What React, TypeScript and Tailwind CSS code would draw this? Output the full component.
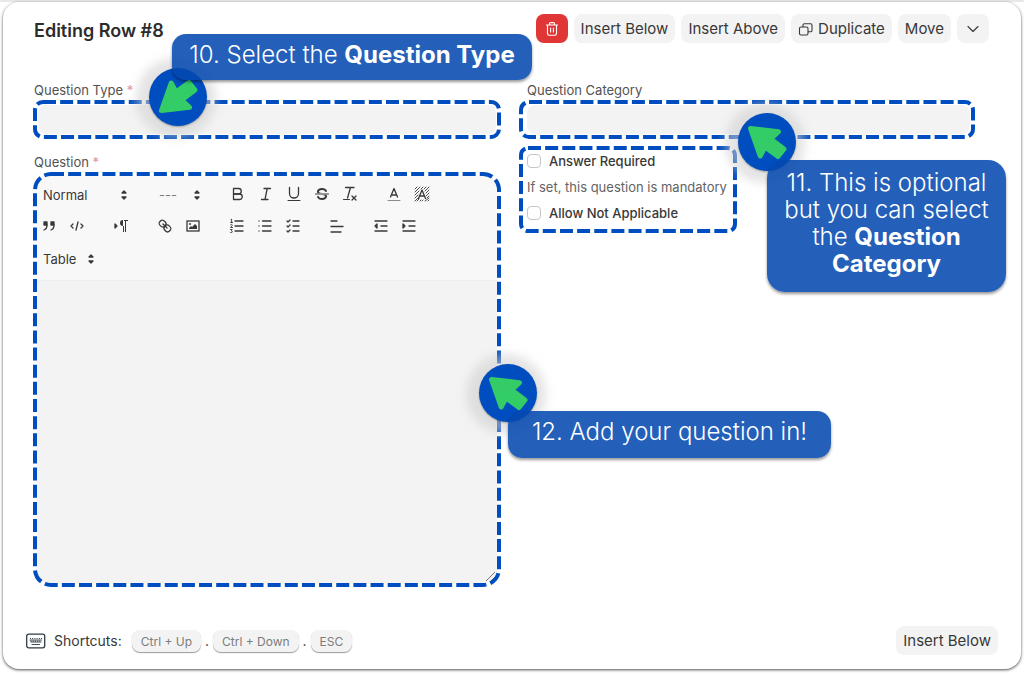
import React from "react";

const thin = { strokeWidth: 1 };

function Icon({ children, className = "" }: { children: React.ReactNode; className?: string }) {
  return (
    <svg
      viewBox="0 0 18 18"
      width="18"
      height="18"
      fill="none"
      stroke="#383838"
      strokeWidth="1.3"
      strokeLinecap="round"
      strokeLinejoin="round"
      aria-hidden="true"
      className={className}
    >
      {children}
    </svg>
  );
}

function Tool({ label, children }: { label: string; children: React.ReactNode }) {
  return (
    <button type="button" aria-label={label} className="flex h-6 w-7 items-center justify-center">
      <Icon>{children}</Icon>
    </button>
  );
}

function Picker({ label, value, width, tone }: { label: string; value: string; width: string; tone: string }) {
  return (
    <div className={`relative h-6 ${width}`}>
      <select
        aria-label={label}
        className={`h-6 w-full appearance-none bg-transparent pl-2 text-[13px] leading-6 outline-none ${tone}`}
      >
        <option>{value}</option>
      </select>
      <Icon className="pointer-events-none absolute top-1 right-0.5">
        <polygon points="7 11 9 13 11 11" fill="#383838" />
        <polygon points="7 7 9 5 11 7" fill="#383838" />
      </Icon>
    </div>
  );
}

function DashedFrame({ radius }: { radius: number }) {
  return (
    <svg className="pointer-events-none absolute inset-0 h-full w-full" aria-hidden="true">
      <rect
        x="2"
        y="2"
        rx={radius}
        className="h-[calc(100%-4px)] w-[calc(100%-4px)]"
        fill="none"
        stroke="#004dbf"
        strokeWidth="4"
        strokeDasharray="13 4.15"
      />
    </svg>
  );
}

function Pointer({ place, flip = "" }: { place: string; flip?: string }) {
  return (
    <div
      className={`pointer-events-none absolute size-[58px] rounded-full bg-[#004dbf] shadow-[0_1px_2px_rgba(0,0,0,0.3),-2px_1px_10px_11px_rgba(205,205,205,0.55)] ${place}`}
    >
      <svg viewBox="0 0 58 58" className={`size-[58px] ${flip}`} aria-hidden="true">
        <path
          d="M12.5 15.5 L40.5 18.7 L32.7 26 L46 36 L40 43.5 L27 34 L22.2 43 Z"
          fill="#33cc66"
          stroke="#33cc66"
          strokeWidth="5"
          strokeLinejoin="round"
        />
      </svg>
    </div>
  );
}

function Callout({ place, children }: { place: string; children: React.ReactNode }) {
  return (
    <div
      className={`pointer-events-none absolute flex items-center justify-center bg-[#0348af]/87 text-center font-light text-white shadow-[0_2px_3px_rgba(0,0,0,0.4)] ${place}`}
    >
      <p>{children}</p>
    </div>
  );
}

const action =
  "flex h-[29px] items-center justify-center gap-1 rounded-lg bg-[#f3f3f3] text-[15px] leading-5 text-[#383838]";
const label = "block h-[21px] pt-px text-[13px] leading-5 text-[#525252]";
const key =
  "flex h-[22px] items-center rounded-lg bg-[#f3f3f3] px-[9px] pt-px text-[12px] text-[#7c7c7c] shadow-[0_1px_1px_rgba(0,0,0,0.4)]";

function Check({ id, text }: { id: string; text: string }) {
  return (
    <div className="flex h-5 items-center gap-2">
      <input
        id={id}
        type="checkbox"
        className="size-3.5 shrink-0 appearance-none rounded-sm border border-[#c7c7c7] bg-white"
      />
      <label htmlFor={id} className="text-[13px] leading-5 font-medium whitespace-nowrap text-[#383838]">
        {text}
      </label>
    </div>
  );
}

export default function App() {
  return (
    <div className="bg-[linear-gradient(#e8e8e8_2px,#ffffff_2px)] px-[3px] pt-0.5 pb-1.5 font-['Inter',sans-serif]">
      <main className="rounded-2xl bg-white shadow-[0_1px_3px_rgba(0,0,0,0.7)]">
        <header className="flex items-center justify-between pt-3 pr-8 pl-[31px]">
          <h1 className="pt-1 text-[18px] leading-6 font-semibold text-[#2c2c2c]">Editing Row #8</h1>
          <div className="flex gap-1.5">
            <button type="button" aria-label="Delete row" className={`${action} w-8 bg-[#e03636]!`}>
              <svg width="14" height="16" viewBox="0 0 14 16" fill="none" stroke="#fff" strokeWidth="1.1" strokeLinecap="round" strokeLinejoin="round" aria-hidden="true">
                <path d="M1.5 4h11M4.5 4V2.6c0-.6.4-1 1-1h3c.6 0 1 .4 1 1V4M2.5 4v8.5c0 1 .7 1.7 1.7 1.7h5.6c1 0 1.700-.7 1.700-1.700V4M5.600 7v4M8.400 7v4" />
              </svg>
            </button>
            <button type="button" className={`${action} px-[7px]`}>Insert Below</button>
            <button type="button" className={`${action} px-[7px]`}>Insert Above</button>
            <button type="button" className={`${action} px-[7px]`}>
              <svg width="16" height="16" viewBox="0 0 16 16" fill="none" stroke="#383838" strokeWidth="1.1" strokeLinejoin="round" aria-hidden="true">
                <rect x="1.500" y="6" width="8.500" height="8" rx="1.500" />
                <path d="M5 6V4.200c0-.8.6-1.400 1.400-1.400h6.200c.8 0 1.400.6 1.400 1.400v5.200c0 .8-.6 1.400-1.400 1.400H10" />
              </svg>
              Duplicate
            </button>
            <button type="button" className={`${action} px-[7px]`}>Move</button>
            <button type="button" aria-label="Collapse" className={`${action} w-8`}>
              <svg width="12" height="8" viewBox="0 0 12 8" fill="none" stroke="#383838" strokeWidth="1.100" strokeLinecap="round" strokeLinejoin="round" aria-hidden="true">
                <path d="M1 1.500l5 5 5-5" />
              </svg>
            </button>
          </div>
        </header>

        <div className="grid grid-cols-[468fr_456fr] gap-[18px] pt-9 pr-[46px] pl-[30px]">
          <section>
            <div className="relative">
              <label htmlFor="question-type" className={`${label} pl-px`}>
                Question Type <span className="text-[#eb9091]">*</span>
              </label>
              <div className="relative h-[39px] p-[5px]">
                <input id="question-type" className="h-full w-full rounded-lg bg-[#f3f3f3] px-2 text-sm outline-none" />
                <DashedFrame radius={8} />
              </div>
              <Pointer place="top-[-11px] left-[116px] z-10" flip="-scale-y-100" />
              <Callout place="top-[-45px] left-[139px] z-10 h-[46px] w-[360px] rounded-[14px] pb-1.5 text-[24px] leading-[27px] whitespace-nowrap">
                10. Select the <b className="font-bold">Question Type</b>
              </Callout>
            </div>

            <div className="relative mt-3">
              <span id="question-label" className={`${label} pl-px`}>
                Question <span className="text-[#eb9091]">*</span>
              </span>
              <div className="relative p-1">
                <div className="rounded-xl bg-[#f3f3f3]">
                  <div role="toolbar" aria-label="Formatting" className="flex h-[105px] flex-col gap-2 rounded-t-xl border-b border-[#ededed] bg-[#f8f8f8] pt-1.5">
                    <div className="-ml-0.5 flex gap-4">
                      <Picker label="Heading" value="Normal" width="w-[100px]" tone="text-[#383838]" />
                      <Picker label="Size" value="---" width="w-[57px]" tone="text-[#7c7c7c]" />
                      <div className="flex">
                        <Tool label="Bold">
                          <path d="M4.500,3.500H9.500A2.700,2.700,0,0,1,9.500,9H4.500Z" />
                          <path d="M4.500,9h6A2.700,2.700,0,0,1,10.500,14.500H4.500Z" />
                        </Tool>
                        <Tool label="Italic">
                          <path d="M7 3.500H13.500M4.500 14.500H11M8 14.500L10.200 3.500" />
                        </Tool>
                        <Tool label="Underline">
                          <path d="M4.500,2.500V8.500a4.500,4.500,0,0,0,9,0V2.500" />
                          <path d="M3 15.500H15" {...thin} />
                        </Tool>
                        <Tool label="Strike">
                          <path d="M15.500 9H2.500" {...thin} />
                          <path stroke="none" fill="#383838" d="M9.007,8C6.542,7.791,6,7.519,6,6.500,6,5.792,7.283,5,9,5c1.571,0,2.765.679,2.969,1.309a1,1,0,0,0,1.900-.617C13.356,4.106,11.354,3,9,3,6.200,3,4,4.538,4,6.500a3.200,3.200,0,0,0,.5,1.843Z" />
                          <path stroke="none" fill="#383838" d="M8.984,10C11.457,10.208,12,10.479,12,11.500c0,0.708-1.283,1.500-3,1.500-1.571,0-2.765-.679-2.969-1.309a1,1,0,1,0-1.900.617C4.644,13.894,6.646,15,9,15c2.800,0,5-1.538,5-3.500a3.200,3.200,0,0,0-.5-1.843Z" />
                        </Tool>
                        <Tool label="Clear formatting">
                          <path d="M4.500 2.500H13M6.500 13L9.500 2.500M11 11L15 15M15 11L11 15" />
                          <path d="M2.500 14.500H8.500" {...thin} />
                        </Tool>
                      </div>
                      <div className="flex">
                        <Tool label="Text colour">
                          <path d="M5.500 12L9 3.500L12.500 12M11.600 10H6.400" />
                          <path d="M3 15.500H15" stroke="#8a8a8a" {...thin} />
                        </Tool>
                        <Tool label="Background colour">
                          <path
                            d="M2 4L4 2M2 7L7 2M2 10L6 6M2 13L5 10M2 16L5 13M4 16L6 14M7 16L8 15M8 4L10 2M11 4L13 2M12 6L16 2M13 8L16 5M13 11L16 8M14 13L16 11M12 16L16 13M9 16L10 15M15 16L16 15"
                            strokeWidth="0.900"
                          />
                          <path d="M5.500 13.500L9 5L12.500 13.500M11.600 11H6.400" />
                        </Tool>
                      </div>
                    </div>
                    <div className="-ml-0.5 flex gap-4">
                      <div className="flex">
                        <Tool label="Quote">
                          <path d="M4 5H7V8H4ZM11 5H14V8H11Z" fill="#383838" />
                          <path d="M7,8c0,4-3,5-3,5M14,8c0,4-3,5-3,5" />
                        </Tool>
                        <Tool label="Code">
                          <path d="M5 7L3 9L5 11M13 7L15 9L13 11M10 5L8 13" />
                        </Tool>
                      </div>
                      <Tool label="Text direction">
                        <path d="M3 11L5 9L3 7Z" fill="#383838" />
                        <path stroke="none" fill="#383838" d="M11,3a3,3,0,0,0,0,6h1V3ZM11 4h1v11h-1ZM13 4h1v11h-1ZM11 3h5v1h-5Z" />
                      </Tool>
                      <div className="flex">
                        <Tool label="Link">
                          <path d="M7 7L11 11" />
                          <path d="M8.900,4.577a3.476,3.476,0,0,1,.36,4.679A3.476,3.476,0,0,1,4.577,8.900C3.185,7.500,2.035,6.400,4.217,4.217S7.500,3.185,8.900,4.577Z" />
                          <path d="M13.423,9.100a3.476,3.476,0,0,0-4.679-.36,3.476,3.476,0,0,0,.36,4.679c1.392,1.392,2.500,2.542,4.679.36S14.815,10.500,13.423,9.100Z" />
                        </Tool>
                        <Tool label="Image">
                          <rect x="3" y="4" width="12" height="10" strokeLinejoin="miter" />
                          <circle cx="6" cy="7" r="1" fill="#383838" stroke="none" />
                          <path stroke="none" fill="#383838" d="M5 12V11L7 9L8 10L11 7L13 9V12Z" />
                        </Tool>
                      </div>
                      <div className="flex">
                        <Tool label="Numbered list">
                          <path d="M7 4H15M7 9H15M7 14H15" />
                          <path d="M3 2.500L3.600 2.200V5.500M2.600 5.500H4.600M2.600 7.700C3.400 7 4.500 7.500 4.200 8.400L2.600 10.500H4.600M2.600 12.500H4.200L3.400 13.800C4.600 13.800 4.600 15.500 3.600 15.500H2.600" strokeWidth="0.900" />
                        </Tool>
                        <Tool label="Bulleted list">
                          <path d="M6.500 4H15M6.500 9H15M6.500 14H15M3 4H3.010M3 9H3.010M3 14H3.010" />
                        </Tool>
                        <Tool label="Check list">
                          <path d="M9 4H15M9 9H15M9 14H15M3 4L4 5L6 3M3 9L4 10L6 8M3 14L4 15L6 13" />
                        </Tool>
                      </div>
                      <Tool label="Align">
                        <path d="M3 4H9M3 9.500H15M3 15H13" />
                      </Tool>
                      <div className="flex">
                        <Tool label="Outdent">
                          <path d="M3 4H15M9 9H15M3 14H15" />
                          <path d="M5 7V11L3 9Z" fill="#383838" />
                        </Tool>
                        <Tool label="Indent">
                          <path d="M3 4H15M9 9H15M3 14H15" />
                          <path d="M3 7V11L5 9Z" fill="#383838" />
                        </Tool>
                      </div>
                    </div>
                    <div className="-ml-0.5 flex">
                      <Picker label="Table" value="Table" width="w-[67px]" tone="text-[#383838]" />
                    </div>
                  </div>
                  <textarea
                    aria-labelledby="question-label"
                    className="block h-[302px] w-full resize-none rounded-b-xl bg-[#f3f3f3] p-3 text-sm outline-none"
                  />
                </div>
                <svg className="pointer-events-none absolute right-1.5 bottom-1.5" width="9" height="9" viewBox="0 0 9 9" stroke="#555" strokeWidth="0.800" aria-hidden="true">
                  <path d="M0 9L9 0M5 9L9 5" />
                </svg>
                <DashedFrame radius={16} />
              </div>
              <Pointer place="top-[213px] right-[-36px] z-10" />
              <Callout place="top-[260px] left-[475px] z-10 h-[47px] w-[323px] rounded-[14px] pb-1.5 text-[24px] leading-[27px] whitespace-nowrap">
                12. Add your question in!
              </Callout>
            </div>
          </section>

          <section>
            <div className="relative">
              <label htmlFor="question-category" className={`${label} pl-2`}>
                Question Category
              </label>
              <div className="relative h-[39px] py-[5px] pr-[5px] pl-2">
                <input id="question-category" className="h-full w-full rounded-lg bg-[#f3f3f3] px-2 text-sm outline-none" />
                <DashedFrame radius={8} />
              </div>
              <Pointer place="top-[34px] left-[219px] z-10" />
              <Callout place="top-[81px] left-[248px] z-10 h-[132px] w-[239px] rounded-[18px] pb-1.5 text-[24px] leading-[27px] whitespace-nowrap">
                11. This is optional
                <br />
                but you can select
                <br />
                the <b className="font-bold">Question</b>
                <br />
                <b className="font-bold">Category</b>
              </Callout>
            </div>

            <div className="relative mt-[7px] flex h-[87px] w-[218px] flex-col gap-1.5 pt-[5px] pl-2">
              <Check id="answer-required" text="Answer Required" />
              <p className="text-[13px] leading-5 whitespace-nowrap text-[#636363]">If set, this question is mandatory</p>
              <Check id="allow-na" text="Allow Not Applicable" />
              <DashedFrame radius={7} />
            </div>
          </section>
        </div>

        <footer className="flex items-center justify-between px-[23px] pt-[39px] pb-3.5">
          <div className="flex items-center pt-px text-[#383838]">
            <svg width="20" height="16" viewBox="0 0 20 16" fill="none" stroke="#2f3a44" strokeLinecap="round" aria-hidden="true">
              <rect x="0.700" y="1.200" width="18" height="13.600" rx="2" strokeWidth="1.300" />
              <path d="M4 5.500H16M4.500 8.200H15.500" strokeWidth="1.200" strokeDasharray="1 1.200" strokeLinecap="butt" />
              <path d="M4 7H15.500M5 9H15M6 11.500H13.500" strokeWidth="0.900" />
            </svg>
            <span className="mr-2.5 ml-2 text-[14px] leading-5">Shortcuts:</span>
            <kbd className={`${key} font-['Inter',sans-serif]`}>Ctrl + Up</kbd>
            <span className="w-3 text-center text-sm">.</span>
            <kbd className={`${key} font-['Inter',sans-serif]`}>Ctrl + Down</kbd>
            <span className="w-3 text-center text-sm">.</span>
            <kbd className={`${key} font-['Inter',sans-serif]`}>ESC</kbd>
          </div>
          <button type="button" className={`${action} px-[7px]`}>Insert Below</button>
        </footer>
      </main>
    </div>
  );
}
